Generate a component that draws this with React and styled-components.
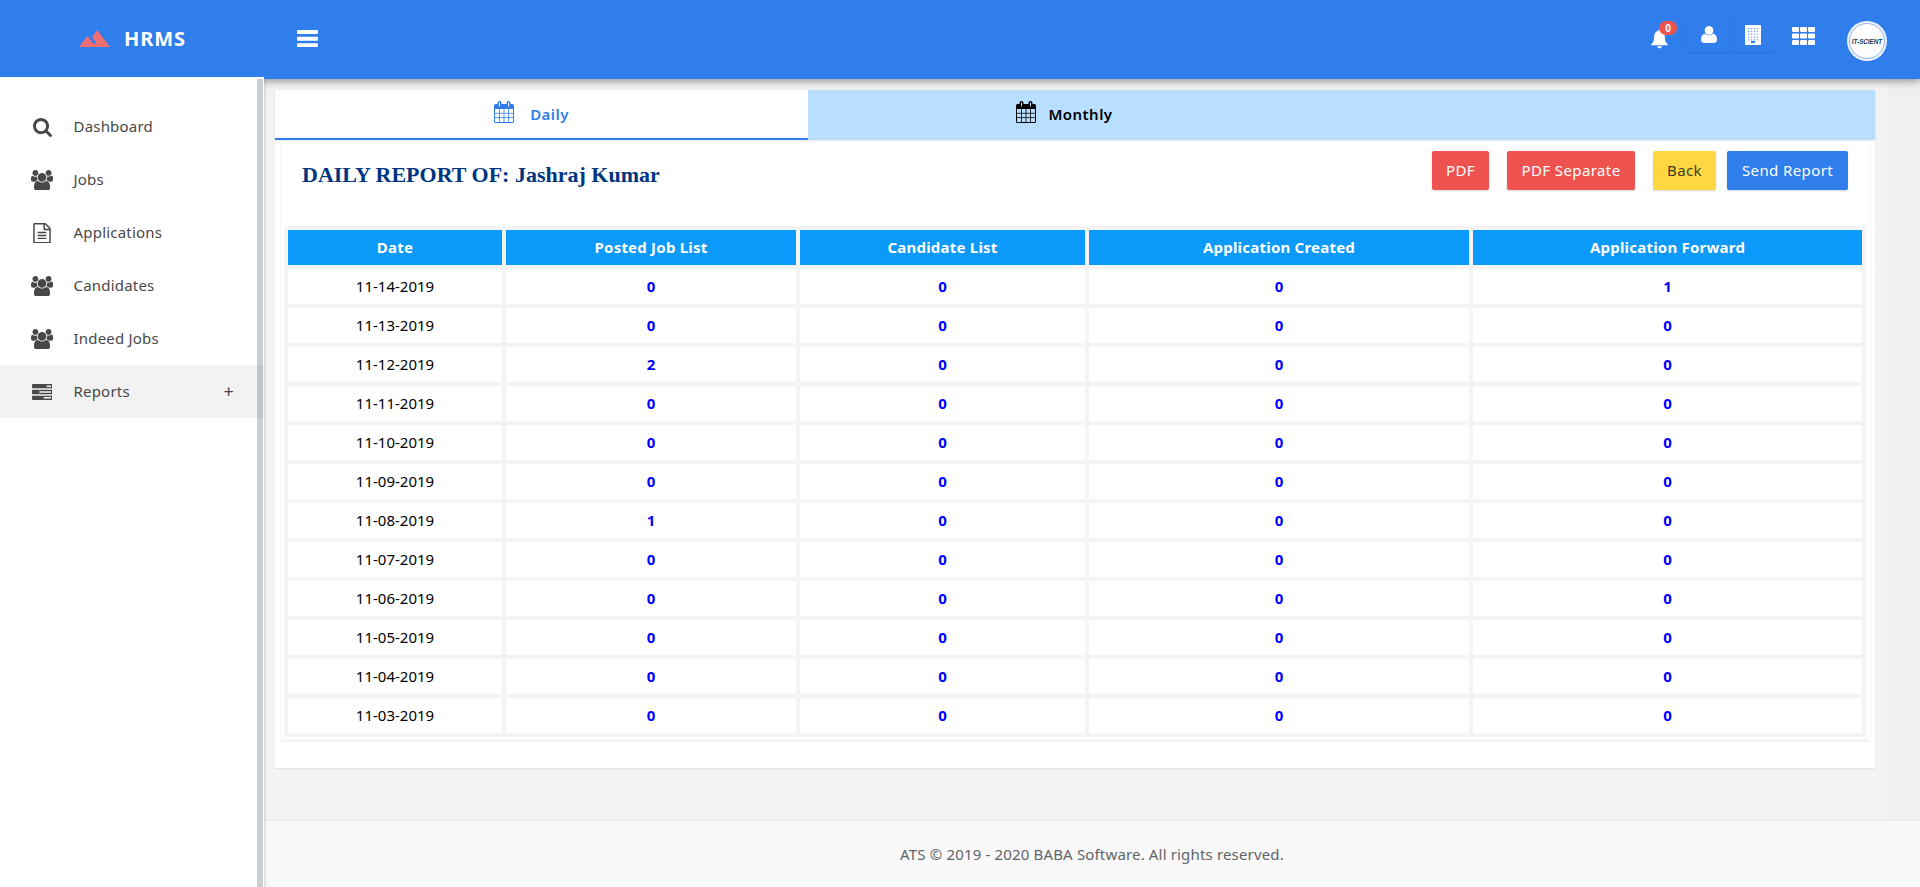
import React from 'react';
import styled, { createGlobalStyle } from 'styled-components';

const GlobalStyle = createGlobalStyle`
  * { box-sizing: border-box; }
  html, body { margin: 0; padding: 0; }
  body {
    height: 887px;
    overflow: hidden;
    background: #f0f0f0;
    color: #000;
    font-family: "Noto Sans", "Open Sans", sans-serif;
    font-size: 15px;
  }
  button { font-family: inherit; }
`;

const Page = styled.div`
  height: 887px;
  display: flex;
  flex-direction: column;
`;

const Header = styled.header`
  position: relative;
  z-index: 1;
  flex: none;
  height: 79px;
  display: flex;
  background: #307eec;
  box-shadow: 0 2px 8px rgba(0, 0, 0, 0.42);
  color: #fff;
`;

const Brand = styled.div`
  width: 264px;
  height: 77px;
  padding-left: 79px;
  display: flex;
  align-items: center;
  color: #ee6e73;
`;

const BrandName = styled.span`
  margin-left: 14px;
  color: #fff;
  font-size: 20px;
  font-weight: 700;
  letter-spacing: 0.9px;
`;

const MenuToggle = styled.div`
  margin-left: 32.5px;
  height: 77px;
  display: flex;
  align-items: center;
`;

const HeaderTools = styled.div`
  margin-left: auto;
  padding-right: 33px;
  display: flex;
  align-items: flex-start;
`;

const BellTool = styled.div`
  position: relative;
  margin: 29px 19px 0 0;
  height: 20px;
`;

const CountBadge = styled.span`
  position: absolute;
  left: 8px;
  top: -8px;
  width: 18px;
  height: 14px;
  border-radius: 7px;
  background: #ef5350;
  color: #fff;
  font-size: 10px;
  font-weight: 700;
  line-height: 14px;
  text-align: center;
`;

const RaisedTool = styled.div`
  width: ${(p) => p.$width}px;
  height: 35px;
  margin: 17px 1px 0 0;
  display: flex;
  justify-content: center;
  align-items: center;
  border-radius: 2px;
  box-shadow: 0 1px 2px rgba(0, 0, 0, 0.1);
`;

const GridTool = styled.div`
  margin: 27px 32px 0 16px;
  height: 19px;
`;

const Avatar = styled.div`
  width: 40px;
  height: 40px;
  margin-top: 21px;
  padding: 2px;
  border-radius: 50%;
  background: #eef3fb;
`;

const AvatarFace = styled.div`
  width: 36px;
  height: 36px;
  display: flex;
  align-items: center;
  justify-content: center;
  border: 1px solid #8fb2e6;
  border-radius: 50%;
  background: #fff;
  color: #123a66;
  font-family: "Liberation Sans", sans-serif;
  font-size: 6.3px;
  font-style: italic;
  font-weight: 700;
  white-space: nowrap;
`;

const Body = styled.div`
  flex: 1;
  min-height: 0;
  display: flex;
`;

const Sidebar = styled.nav`
  position: relative;
  z-index: 2;
  width: 264px;
  margin-top: -2px;
  padding-top: 23px;
  background: linear-gradient(#fff, #fff) 0 0 / 100% 2px no-repeat,
    linear-gradient(#c9cfd2, #c9cfd2) 257px 0 / 6px 100% no-repeat, #fff;
  box-shadow: 1px 2px 3px rgba(0, 0, 0, 0.16);
`;

const NavItem = styled.a`
  height: 53px;
  padding: 0 30px 2px 31px;
  display: flex;
  align-items: center;
  background: ${(p) => (p.$active ? 'rgba(0, 0, 0, 0.05)' : 'transparent')};
  color: #484848;
  font-size: 15px;
  letter-spacing: 0.2px;
`;

const NavIcon = styled.span`
  width: 22px;
  margin: 3px 20.5px 0 0;
  display: flex;
  justify-content: center;
`;

const NavLabel = styled.span`
  flex: 1;
`;

const ExpandMark = styled.span`
  font-size: 18px;
`;

const Main = styled.div`
  flex: 1;
  min-width: 0;
  display: flex;
  flex-direction: column;
`;

const Content = styled.main`
  flex: 1;
  min-height: 0;
  width: 1622px;
  padding: 11px 11px 0;
  background: #f3f3f3;
`;

const Card = styled.section`
  height: 678px;
  background: #fff;
  box-shadow: 0 1px 1px rgba(0, 0, 0, 0.06);
`;

const Tabs = styled.div`
  height: 50px;
  display: flex;
  background: #b8dfff;
  box-shadow: 0 1px 2px rgba(0, 0, 0, 0.1);
`;

const Tab = styled.div`
  width: 533px;
  height: 50px;
  display: flex;
  justify-content: center;
  align-items: center;
  gap: ${(p) => p.$gap}px;
  padding-right: 20px;
  border-bottom: 2px solid ${(p) => (p.$active ? '#307eec' : 'transparent')};
  background: ${(p) => (p.$active ? '#fff' : 'transparent')};
  color: ${(p) => (p.$active ? '#307eec' : '#000')};
  font-size: 15px;
  font-weight: 600;
  letter-spacing: 0.45px;

  svg { margin-bottom: 5px; }
`;

const Panel = styled.div`
  height: 596px;
  margin: 4px 5px 0 6px;
  padding: 7px 4px 0 3px;
  box-shadow: 0 1px 2px rgba(0, 0, 0, 0.1);
`;

const PanelHead = styled.div`
  height: 75px;
  padding: 0 18px 0 18px;
  display: flex;
  align-items: flex-start;
`;

const Title = styled.h1`
  margin: 10px auto 0 0;
  color: #003580;
  font-family: "Liberation Serif", serif;
  font-size: 22px;
  font-weight: 700;
  line-height: 28px;
`;

const tones = {
  red: ['#ef5350', '#fff'],
  yellow: ['#ffd740', '#3e3a24'],
  blue: ['#307eec', '#fff'],
};

const Button = styled.button`
  width: ${(p) => p.$width}px;
  height: 39px;
  margin-left: ${(p) => p.$gap}px;
  padding: 0 0 2px;
  border: 0;
  border-radius: 2px;
  background: ${(p) => tones[p.$tone][0]};
  color: ${(p) => tones[p.$tone][1]};
  box-shadow: 0 1px 2px rgba(0, 0, 0, 0.16);
  font-size: 15px;
  letter-spacing: 0.4px;
`;

const Table = styled.div`
  display: grid;
  grid-template-columns: 214px 290px 285px 380px 389px;
  grid-auto-rows: 35px;
  justify-content: space-between;
  row-gap: 4px;
  padding: 4px;
  background: #f4f4f4;
`;

const Cell = styled.div`
  padding-bottom: 2px;
  display: flex;
  justify-content: center;
  align-items: center;
  background: ${(p) => (p.$head ? '#0b99fa' : '#fff')};
  color: ${(p) => (p.$head ? '#fff' : p.$count ? '#0000ff' : '#000')};
  font-size: 15px;
  font-weight: ${(p) => (p.$head || p.$count ? 700 : 400)};
  letter-spacing: ${(p) => (p.$head ? 0.22 : 0)}px;
`;

const Footer = styled.footer`
  flex: none;
  height: 67px;
  display: flex;
  justify-content: center;
  align-items: center;
  border-top: 1px solid #e9e9e9;
  background: #f9f9f9;
  color: #606468;
  font-size: 15px;
  letter-spacing: 0.16px;
`;

const Svg = ({ box, w, h, children }) => (
  <svg viewBox={box} width={w} height={h} fill="currentColor">
    {children}
  </svg>
);

const SearchIcon = () => (
  <Svg box="64 128 1664 1664" w={19} h={19}>
    <path d="M1216 832q0-185-131.5-316.5t-316.5-131.5-316.5 131.5-131.5 316.5 131.5 316.5 316.5 131.5 316.5-131.5 131.5-316.5zm512 832q0 52-38 90t-90 38q-54 0-90-38l-343-342q-179 124-399 124-143 0-273.5-55.5t-225-150-150-225-55.5-273.5 55.5-273.5 150-225 225-150 273.5-55.5 273.5 55.5 225 150 150 225 55.5 273.5q0 220-124 399l343 343q37 37 37 90z" />
  </Svg>
);

const UsersIcon = () => (
  <Svg box="64 0 1920 1792" w={22} h={20.5}>
    <path d="M657 896q-162 5-265 128h-134q-82 0-138-40.5t-56-118.5q0-353 124-353 6 0 43.5 21t97.5 42.5 119 21.5q67 0 133-23-5 37-5 66 0 159 93 287zm1071 637q0 120-73 189.5t-194 69.5h-874q-121 0-194-69.5t-73-189.5q0-53 3.5-103.5t14-109 26.5-108.5 43-97.5 62-81 85.5-53.5 111.5-20q10 0 43 21.5t73 48 107 48 135 21.5 135-21.5 107-48 73-48 43-21.5q61 0 111.5 20t85.5 53.5 62 81 43 97.5 26.5 108.5 14 109 3.5 103.5zm-1024-1277q0 106-75 181t-181 75-181-75-75-181 75-181 181-75 181 75 75 181zm704 384q0 159-112.5 271.5t-271.5 112.5-271.5-112.5-112.5-271.5 112.5-271.5 271.5-112.5 271.5 112.5 112.5 271.5zm576 225q0 78-56 118.5t-138 40.5h-134q-103-123-265-128 93-128 93-287 0-29-5-66 66 23 133 23 59 0 119-21.5t97.5-42.5 43.5-21q124 0 124 353zm-128-609q0 106-75 181t-181 75-181-75-75-181 75-181 181-75 181 75 75 181z" />
  </Svg>
);

const FileIcon = () => (
  <Svg box="128 0 1536 1792" w={18} h={20.5}>
    <path d="M1596 380q28 28 48 76t20 88v1152q0 40-28 68t-68 28h-1344q-40 0-68-28t-28-68v-1600q0-40 28-68t68-28h896q40 0 88 20t76 48zm-444-244v376h376q-10-29-22-41l-313-313q-12-12-41-22zm384 1528v-1024h-416q-40 0-68-28t-28-68v-416h-768v1536h1280zm-1024-864q0-14 9-23t23-9h704q14 0 23 9t9 23v64q0 14-9 23t-23 9h-704q-14 0-23-9t-9-23v-64zm736 224q14 0 23 9t9 23v64q0 14-9 23t-23 9h-704q-14 0-23-9t-9-23v-64q0-14 9-23t23-9h704zm0 256q14 0 23 9t9 23v64q0 14-9 23t-23 9h-704q-14 0-23-9t-9-23v-64q0-14 9-23t23-9h704z" />
  </Svg>
);

const TasksIcon = () => (
  <Svg box="0 128 1792 1408" w={20.5} h={16}>
    <path d="M1024 1408h640v-128h-640v128zm-384-512h1024v-128h-1024v128zm640-512h384v-128h-384v128zm512 832v256q0 26-19 45t-45 19h-1664q-26 0-45-19t-19-45v-256q0-26 19-45t45-19h1664q26 0 45 19t19 45zm0-512v256q0 26-19 45t-45 19h-1664q-26 0-45-19t-19-45v-256q0-26 19-45t45-19h1664q26 0 45 19t19 45zm0-512v256q0 26-19 45t-45 19h-1664q-26 0-45-19t-19-45v-256q0-26 19-45t45-19h1664q26 0 45 19t19 45z" />
  </Svg>
);

const PeaksIcon = () => (
  <Svg box="1 6 22 12" w={31} h={17}>
    <path d="M14 6l-3.75 5 2.85 3.8-1.6 1.2C9.81 13.75 7 10 7 10l-6 8h22L14 6z" />
  </Svg>
);

const BarsIcon = () => (
  <Svg box="0 0 21 17" w={21} h={17}>
    <rect x="0" y="0" width="21" height="4" rx="0.7" />
    <rect x="0" y="6.7" width="21" height="4" rx="0.7" />
    <rect x="0" y="13.2" width="21" height="3.8" rx="0.7" />
  </Svg>
);

const BellIcon = () => (
  <Svg box="0 0 17 19" w={17} h={20}>
    <path d="M8.5 0c-.8 0-1.3.6-1.3 1.3C4.5 1.9 3.2 4 3.2 6.6c0 4.6-.8 6.6-2.900 8.200-.4.400-.3 1 .4 1h15.600c.7 0 .8-.6.4-1-2.100-1.600-2.900-3.600-2.900-8.200 0-2.600-1.300-4.700-4-5.300C9.800.6 9.300 0 8.500 0zM6.200 16.700c.2 1.300 1.100 2.100 2.300 2.100s2.100-.8 2.300-2.100z" />
  </Svg>
);

const UserIcon = () => (
  <Svg box="0 0 16 17" w={16} h={17}>
    <circle cx="8" cy="4.4" r="4.3" />
    <path d="M4 7.6C1.5 8 0 10.3 0 13.5 0 15.7 1.3 17 3.2 17h9.6c1.9 0 3.2-1.3 3.2-3.500 0-3.200-1.500-5.500-4-5.900-1 1.100-2.300 1.700-4 1.700s-3-.6-4-1.700z" />
  </Svg>
);

const BuildingIcon = () => (
  <Svg box="0 0 16 20" w={16} h={20}>
    <rect width="16" height="20" rx="0.8" />
    <g fill="#307eec" opacity="0.65">
      {[3, 5.8, 8.6, 11.4, 14.2].map((y) =>
        [3, 5.9, 8.8, 11.7].map((x) => <rect key={`${x}-${y}`} x={x} y={y} width="1.3" height="1.3" />)
      )}
    </g>
    <rect x="6" y="16" width="4" height="2" fill="#307eec" />
  </Svg>
);

const GridIcon = () => (
  <Svg box="0 0 23 18" w={23} h={18}>
    {[0, 6.5, 13].map((y) =>
      [0, 8, 16].map((x) => <rect key={`${x}-${y}`} x={x} y={y} width="7" height="5" rx="1" />)
    )}
  </Svg>
);

const CalendarIcon = () => (
  <Svg box="0 0 20 22" w={20} h={22}>
    <path
      fillRule="evenodd"
      d="M1.5 3H3.5V2a2 2 0 0 1 4 0v1h5V2a2 2 0 0 1 4 0v1h2A1.5 1.5 0 0 1 20 4.5v16a1.5 1.5 0 0 1-1.5 1.5h-17A1.5 1.5 0 0 1 0 20.5v-16A1.5 1.5 0 0 1 1.5 3zM1 8v13h18V8zM5 1.6v3.8h1V1.6zM14 1.6v3.8h1V1.6z"
    />
    <path d="M5.5 8v13M10 8v13M14.5 8v13M1 12.3h18M1 16.6h18" stroke="currentColor" strokeWidth="0.8" />
  </Svg>
);

const navItems = [
  { label: 'Dashboard', Icon: SearchIcon },
  { label: 'Jobs', Icon: UsersIcon },
  { label: 'Applications', Icon: FileIcon },
  { label: 'Candidates', Icon: UsersIcon },
  { label: 'Indeed Jobs', Icon: UsersIcon },
  { label: 'Reports', Icon: TasksIcon, active: true },
];

const columns = ['Date', 'Posted Job List', 'Candidate List', 'Application Created', 'Application Forward'];

const rows = [
  ['11-14-2019', 0, 0, 0, 1],
  ['11-13-2019', 0, 0, 0, 0],
  ['11-12-2019', 2, 0, 0, 0],
  ['11-11-2019', 0, 0, 0, 0],
  ['11-10-2019', 0, 0, 0, 0],
  ['11-09-2019', 0, 0, 0, 0],
  ['11-08-2019', 1, 0, 0, 0],
  ['11-07-2019', 0, 0, 0, 0],
  ['11-06-2019', 0, 0, 0, 0],
  ['11-05-2019', 0, 0, 0, 0],
  ['11-04-2019', 0, 0, 0, 0],
  ['11-03-2019', 0, 0, 0, 0],
];

export default function App() {
  return (
    <Page>
      <GlobalStyle />
      <Header>
        <Brand>
          <PeaksIcon />
          <BrandName>HRMS</BrandName>
        </Brand>
        <MenuToggle><BarsIcon /></MenuToggle>
        <HeaderTools>
          <BellTool>
            <BellIcon />
            <CountBadge>0</CountBadge>
          </BellTool>
          <RaisedTool $width={43}><UserIcon /></RaisedTool>
          <RaisedTool $width={44}><BuildingIcon /></RaisedTool>
          <GridTool><GridIcon /></GridTool>
          <Avatar><AvatarFace>IT-SCIENT</AvatarFace></Avatar>
        </HeaderTools>
      </Header>
      <Body>
        <Sidebar>
          {navItems.map(({ label, Icon, active }) => (
            <NavItem key={label} $active={active}>
              <NavIcon><Icon /></NavIcon>
              <NavLabel>{label}</NavLabel>
              {active && <ExpandMark>+</ExpandMark>}
            </NavItem>
          ))}
        </Sidebar>
        <Main>
          <Content>
            <Card>
              <Tabs>
                <Tab $active $gap={16}><CalendarIcon />Daily</Tab>
                <Tab $gap={12}><CalendarIcon />Monthly</Tab>
              </Tabs>
              <Panel>
                <PanelHead>
                  <Title>DAILY REPORT OF: Jashraj Kumar</Title>
                  <Button $tone="red" $width={57} $gap={0}>PDF</Button>
                  <Button $tone="red" $width={128} $gap={18}>PDF Separate</Button>
                  <Button $tone="yellow" $width={63} $gap={18}>Back</Button>
                  <Button $tone="blue" $width={121} $gap={11}>Send Report</Button>
                </PanelHead>
                <Table>
                  {columns.map((name) => <Cell key={name} $head>{name}</Cell>)}
                  {rows.map((row) =>
                    row.map((value, i) => <Cell key={`${row[0]}-${i}`} $count={i > 0}>{value}</Cell>)
                  )}
                </Table>
              </Panel>
            </Card>
          </Content>
          <Footer>ATS © 2019 - 2020 BABA Software. All rights reserved.</Footer>
        </Main>
      </Body>
    </Page>
  );
}
